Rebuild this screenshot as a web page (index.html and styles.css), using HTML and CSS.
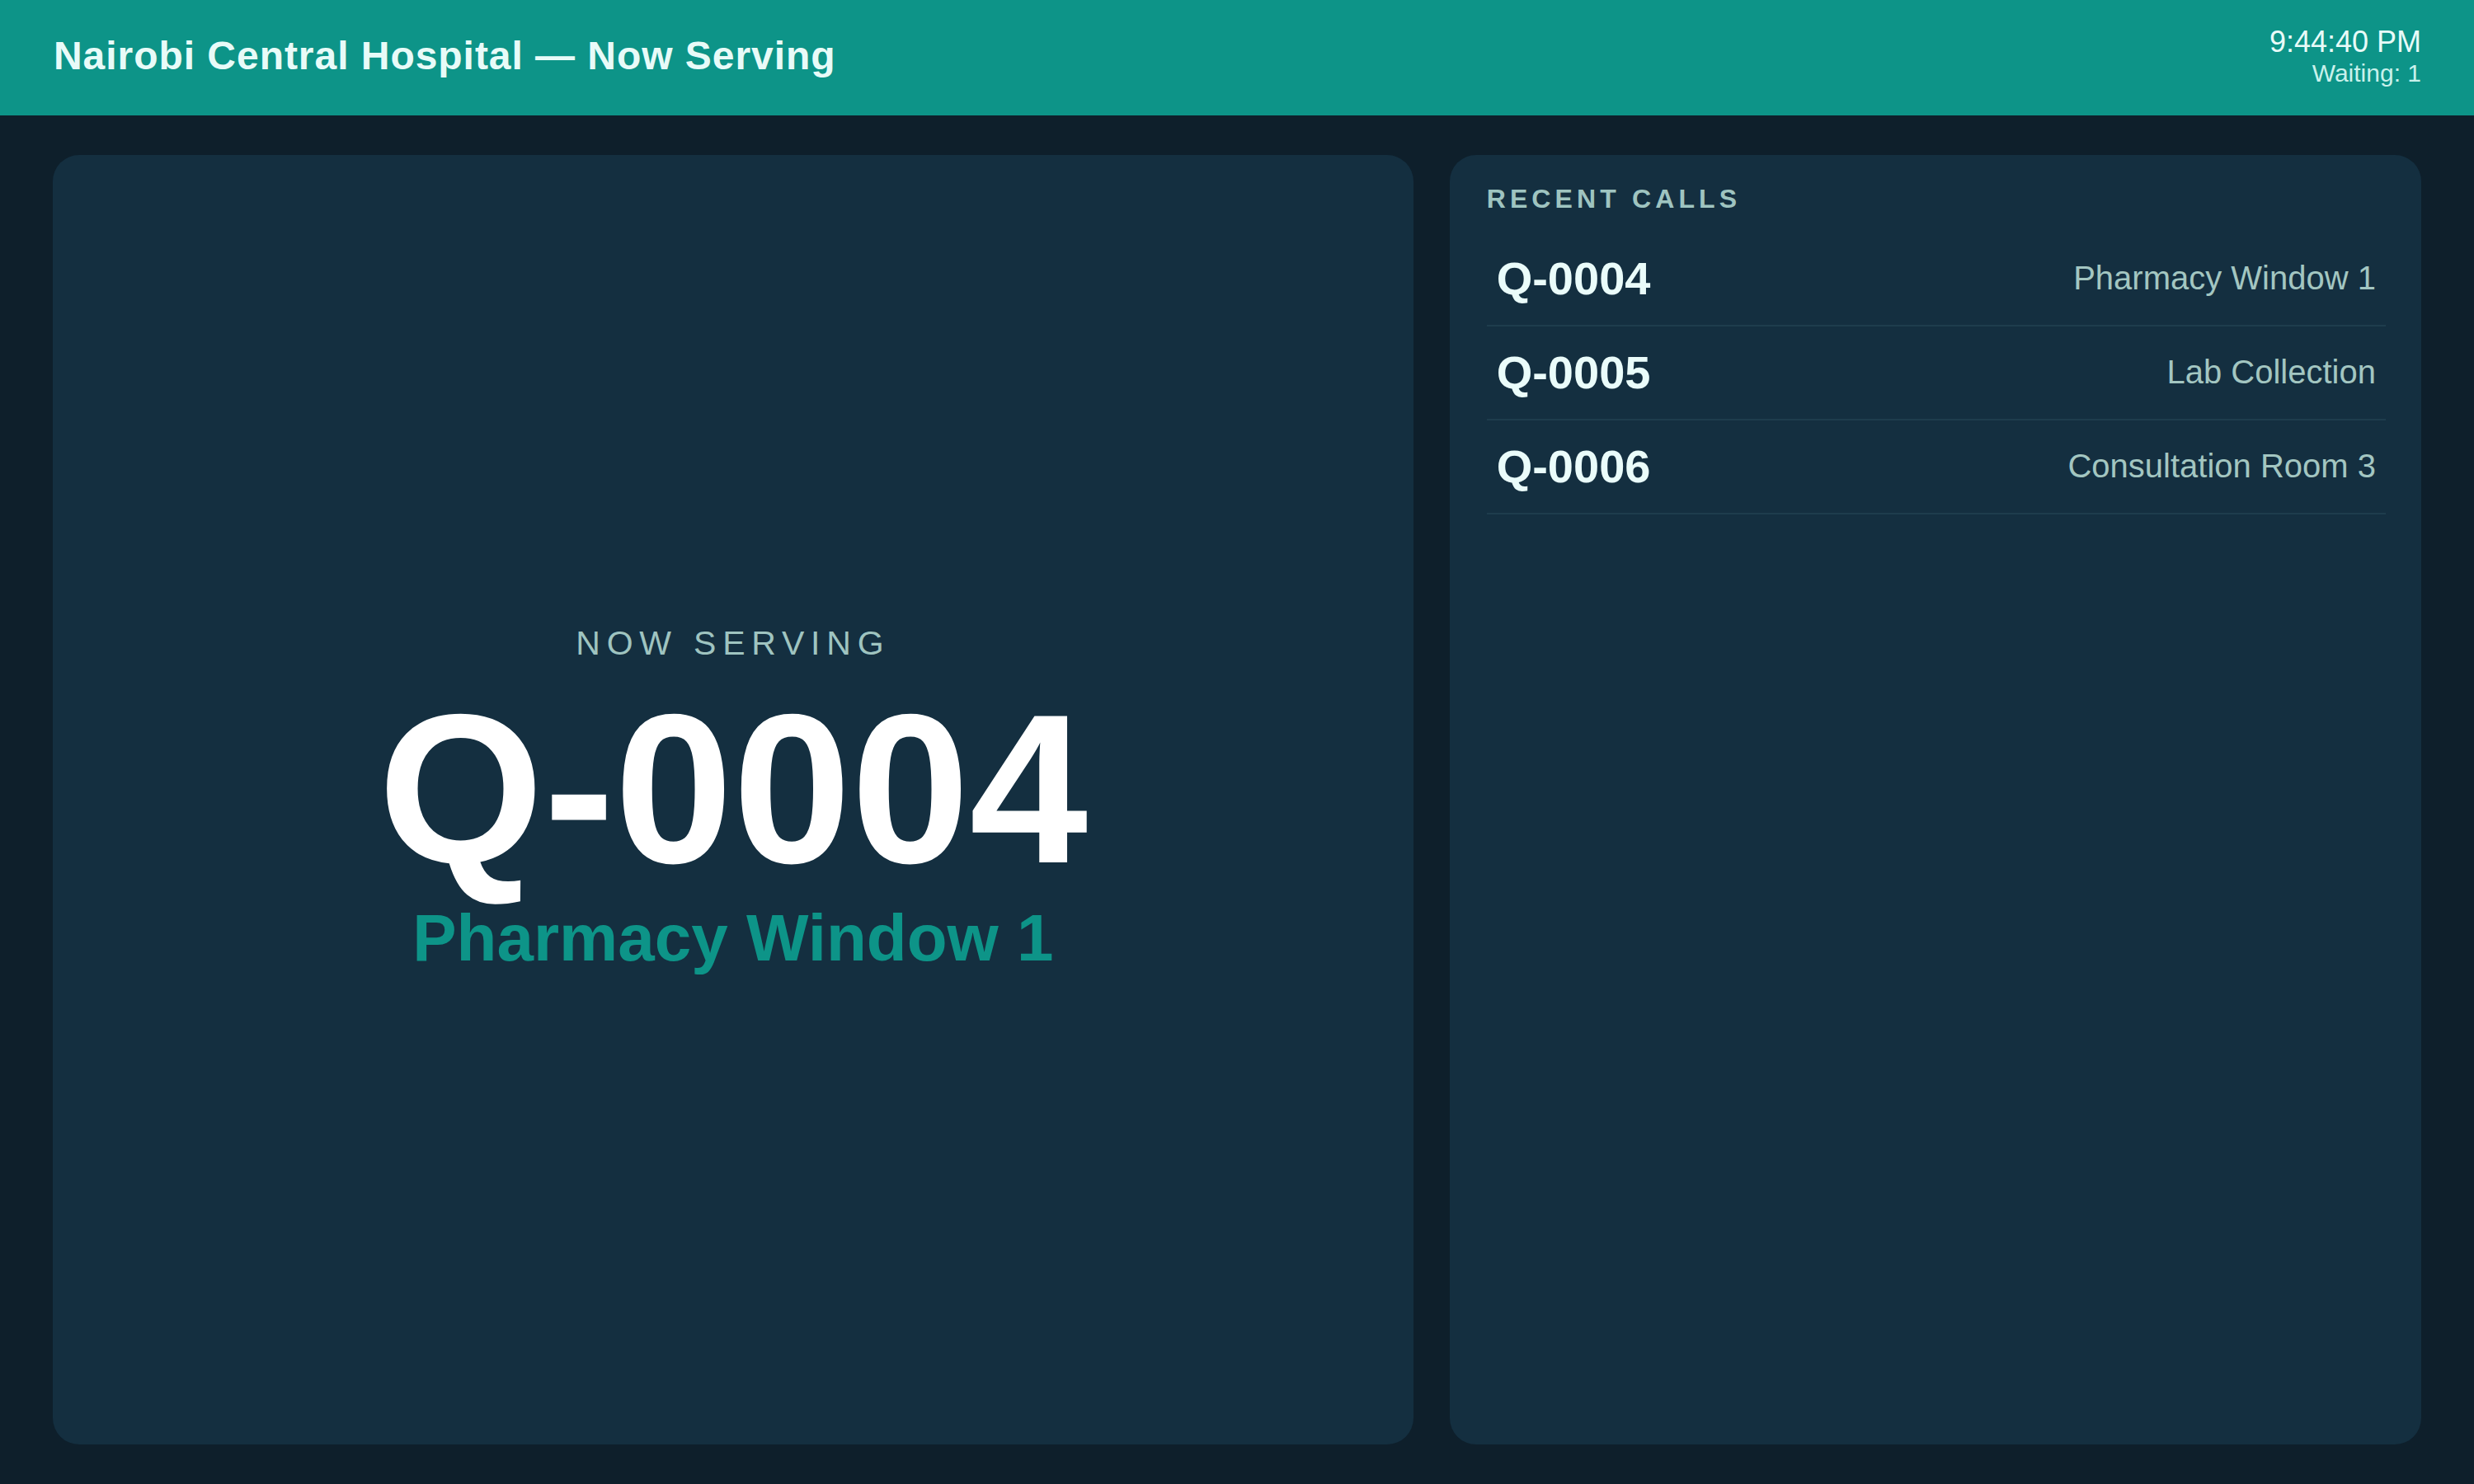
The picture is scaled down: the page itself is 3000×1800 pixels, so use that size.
FILE: index.html
```html
<!DOCTYPE html>
<html lang="en">
<head>
    <meta charset="UTF-8">
    <meta name="viewport" content="width=device-width, initial-scale=1.0">
    <title>Now Serving</title>
    <link rel="stylesheet" href="styles.css">
</head>
<body>
    <header class="topbar">
        <h1 class="topbar-title">Nairobi Central Hospital — Now Serving</h1>
        <div class="topbar-meta">
            <div class="clock">9:44:40 PM</div>
            <div class="waiting">Waiting: 1</div>
        </div>
    </header>
    <main class="board">
        <section class="card now-card">
            <div class="now-label">NOW SERVING</div>
            <div class="now-number">Q-0004</div>
            <div class="now-place">Pharmacy Window 1</div>
        </section>
        <section class="card recent-card">
            <h2 class="recent-title">RECENT CALLS</h2>
            <ul class="recent-list">
                <li class="recent-row">
                    <span class="recent-code">Q-0004</span>
                    <span class="recent-place">Pharmacy Window 1</span>
                </li>
                <li class="recent-row">
                    <span class="recent-code">Q-0005</span>
                    <span class="recent-place">Lab Collection</span>
                </li>
                <li class="recent-row">
                    <span class="recent-code">Q-0006</span>
                    <span class="recent-place">Consultation Room 3</span>
                </li>
            </ul>
        </section>
    </main>
</body>
</html>
```

FILE: styles.css
```css
html, body {
    height: 100%;
}
body {
    font-family: "Liberation Sans", Arial, sans-serif;
    margin: 0;
    padding: 0;
    background-color: #0e1f2b;
    color: #ffffff;
    display: flex;
    flex-direction: column;
}
.topbar {
    background-color: #0d9488;
    height: 140px;
    box-sizing: border-box;
    padding: 0 64px 0 65px;
    display: flex;
    align-items: center;
    justify-content: space-between;
    color: #e8fbf8;
}
.topbar-title {
    margin: 0;
    font-size: 48px;
    font-weight: bold;
    letter-spacing: 0.02em;
    margin-top: -6px;
}
.topbar-meta {
    text-align: right;
    margin-top: -2px;
}
.clock {
    font-size: 36px;
    line-height: 1.1;
}
.waiting {
    font-size: 30px;
    line-height: 1.2;
    color: #c8f1eb;
}
.board {
    flex: 1;
    display: grid;
    grid-template-columns: 1.4fr 1fr;
    gap: 44px;
    padding: 48px 64px;
}
.card {
    background-color: #142f40;
    border-radius: 32px;
}
.now-card {
    display: flex;
    flex-direction: column;
    align-items: center;
    justify-content: center;
}
.now-label {
    font-size: 41px;
    letter-spacing: 0.19em;
    color: #9fc4c0;
}
.now-number {
    font-size: 258px;
    font-weight: bold;
    line-height: 1;
    margin-top: 24px;
}
.now-place {
    font-size: 80px;
    font-weight: bold;
    color: #0d9488;
    margin-top: 6px;
}
.recent-card {
    padding: 35px 43px 44px 45px;
}
.recent-title {
    margin: 0 0 22px;
    font-size: 32px;
    font-weight: bold;
    letter-spacing: 0.16em;
    color: #9fc4c0;
}
.recent-list {
    list-style: none;
    margin: 0;
    padding: 0;
}
.recent-row {
    display: flex;
    align-items: center;
    justify-content: space-between;
    padding: 23px 12px 24px;
    border-bottom: 2px solid #1e3d4d;
}
.recent-code {
    font-size: 56px;
    font-weight: bold;
    color: #eafcfa;
}
.recent-place {
    font-size: 40px;
    color: #a3c6c1;
}
```
